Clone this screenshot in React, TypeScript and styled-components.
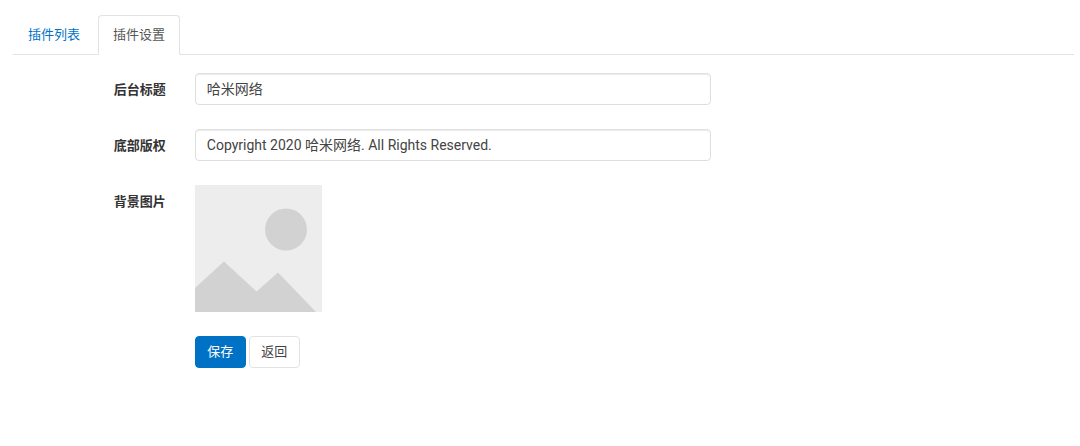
import React from "react";
import styled, { createGlobalStyle } from "styled-components";

const GlobalStyle = createGlobalStyle`
  *, *::before, *::after { box-sizing: border-box; }
  body {
    margin: 0;
    background: #fff;
    color: #333;
    font: 13px/20px "Noto Sans", "Noto Sans CJK SC", sans-serif;
  }
`;

const Page = styled.main`
  padding: 15px 6px 24px 13px;
`;

const Tabs = styled.nav`
  display: flex;
  gap: 3px;
  border-bottom: 1px solid #e2e2e2;
  margin-bottom: 18px;
`;

const Tab = styled.a<{ $active?: boolean }>`
  margin-bottom: -1px;
  padding: 8px 14px 10px;
  border: 1px solid ${(p) => (p.$active ? "#e2e2e2" : "transparent")};
  border-bottom-color: ${(p) => (p.$active ? "#fff" : "transparent")};
  border-radius: 4px 4px 0 0;
  background: ${(p) => (p.$active ? "#fff" : "transparent")};
  color: ${(p) => (p.$active ? "#555" : "#0072c6")};
  text-decoration: none;
`;

const Form = styled.form`
  display: flex;
  flex-direction: column;
  gap: 24px;
  margin: 0 -15px;
`;

const Row = styled.div`
  display: grid;
  grid-template-columns: 2fr 6fr 4fr;
  align-items: start;
`;

const Label = styled.label`
  padding: 6px 14px 0;
  font-weight: 700;
  text-align: right;
`;

const Field = styled.div`
  grid-column: 2;
  display: flex;
  gap: 3px;
  padding: 0 14px 0 15px;
`;

const TextInput = styled.input`
  width: 100%;
  height: 32px;
  padding: 4px 11px 6px;
  border: 1px solid #dedede;
  border-radius: 4px;
  background: #fff;
  box-shadow: inset 0 1px 1px rgba(0, 0, 0, 0.075);
  color: #444;
  font: 14px/20px Roboto, "Noto Sans CJK SC", sans-serif;
`;

const ImageButton = styled.button`
  padding: 0;
  border: 0;
  background: none;
  cursor: pointer;

  svg { display: block; }
`;

const Button = styled.button<{ $primary?: boolean }>`
  min-width: 51px;
  height: 32px;
  padding: 4px 11px 6px;
  border: 1px solid ${(p) => (p.$primary ? "#0072c6" : "#e2e2e2")};
  border-radius: 4px;
  background: ${(p) => (p.$primary ? "#0072c6" : "#fff")};
  color: ${(p) => (p.$primary ? "#fff" : "#444")};
  font: inherit;
  cursor: pointer;
`;

function Placeholder() {
  return (
    <svg width="127" height="127" viewBox="0 0 127 127" aria-hidden="true">
      <rect width="127" height="127" fill="#ededed" />
      <circle cx="91" cy="44.500" r="21" fill="#d2d2d2" />
      <path d="M0 103L29 76.500L61.500 106.500L83 87.500L121 127H0Z" fill="#d2d2d2" />
    </svg>
  );
}

export default function App() {
  return (
    <>
      <GlobalStyle />
      <Page>
        <Tabs>
          <Tab href="#list">插件列表</Tab>
          <Tab href="#settings" $active aria-current="page">插件设置</Tab>
        </Tabs>
        <Form onSubmit={(e) => e.preventDefault()}>
          <Row>
            <Label htmlFor="title">后台标题</Label>
            <Field>
              <TextInput id="title" type="text" defaultValue="哈米网络" />
            </Field>
          </Row>
          <Row>
            <Label htmlFor="copyright">底部版权</Label>
            <Field>
              <TextInput
                id="copyright"
                type="text"
                defaultValue="Copyright 2020 哈米网络. All Rights Reserved."
              />
            </Field>
          </Row>
          <Row>
            <Label htmlFor="background">背景图片</Label>
            <Field>
              <ImageButton id="background" type="button">
                <Placeholder />
              </ImageButton>
            </Field>
          </Row>
          <Row>
            <Field>
              <Button type="submit" $primary>保存</Button>
              <Button type="button">返回</Button>
            </Field>
          </Row>
        </Form>
      </Page>
    </>
  );
}
